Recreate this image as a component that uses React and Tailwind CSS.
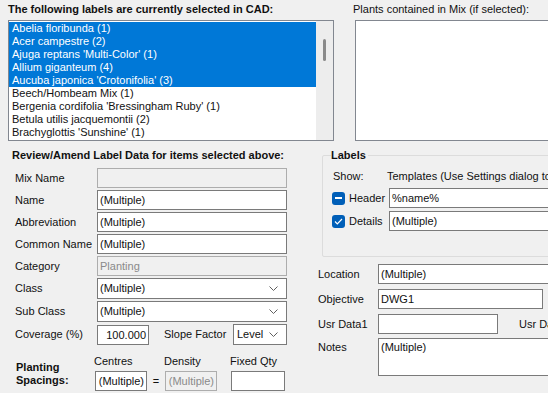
import React from 'react';

const items = [
  ['Abelia floribunda (1)', true],
  ['Acer campestre (2)', true],
  ["Ajuga reptans 'Multi-Color' (1)", true],
  ['Allium giganteum (4)', true],
  ["Aucuba japonica 'Crotonifolia' (3)", true],
  ['Beech/Hombeam Mix (1)', false],
  ["Bergenia cordifolia 'Bressingham Ruby' (1)", false],
  ['Betula utilis jacquemontii (2)', false],
  ["Brachyglottis 'Sunshine' (1)", false],
];

const Chevron = () => (
  <svg width="9" height="5" viewBox="0 0 9 5" className="shrink-0">
    <polyline points="0.5,0.5 4.5,4.5 8.5,0.5" fill="none" stroke="#606060" strokeWidth="1" />
  </svg>
);

const Field = ({ value = '', disabled, className = '' }) => (
  <div
    className={`h-[20px] border border-[#7a7a7a] px-[2px] leading-[18px] whitespace-nowrap overflow-hidden shrink-0 ${
      disabled ? 'bg-[#f0f0f0] text-[#8a8a8a] border-[#adadad]' : 'bg-white'
    } ${className}`}
  >
    {value}
  </div>
);

const Select = ({ value, className = '' }) => (
  <div className={`h-[21px] border border-[#7a7a7a] bg-white flex items-center justify-between pl-[2px] pr-[8px] shrink-0 ${className}`}>
    <span>{value}</span>
    <Chevron />
  </div>
);

const Row = ({ label, children }) => (
  <div className="flex items-center whitespace-nowrap">
    <div className="w-[83px] pl-[1px] shrink-0">{label}</div>
    {children}
  </div>
);

const Check = ({ mixed }) => (
  <div className="w-[13px] h-[13px] rounded-[3px] bg-[#005fb8] flex items-center justify-center shrink-0">
    {mixed ? (
      <div className="w-[7px] h-[1.5px] bg-white" />
    ) : (
      <svg width="9" height="7" viewBox="0 0 9 7">
        <polyline points="1,3.5 3.3,5.8 8,1" fill="none" stroke="white" strokeWidth="1.2" />
      </svg>
    )}
  </div>
);

export default function App() {
  return (
    <div
      className="w-[548px] h-[393px] overflow-hidden bg-[#f0f0f0] text-[11px] text-[#111] whitespace-nowrap"
      style={{ fontFamily: '"Liberation Sans", Arial, sans-serif' }}
    >
      {/* TOP LISTS */}
      <div className="flex pt-[1px]">
        <div className="ml-[8px] w-[326px] shrink-0">
          <div className="font-bold h-[16px] leading-[16px]">The following labels are currently selected in CAD:</div>
          <div className="mt-[3px] h-[121px] border border-[#828790] bg-white flex overflow-hidden">
            <div className="flex-1 pt-[1px]">
              {items.map(([name, sel]) => (
                <div
                  key={name}
                  className={`h-[13px] leading-[13px] pl-[3px] ${sel ? 'bg-[#0078d7] text-white' : ''}`}
                >
                  {name}
                </div>
              ))}
            </div>
            <div className="w-[17px] bg-[#ededed] shrink-0 flex justify-center pt-[18px]">
              <div className="w-[3px] h-[22px] bg-[#8a8a8a] rounded-full" />
            </div>
          </div>
        </div>
        <div className="ml-[19px] w-[220px] shrink-0">
          <div className="h-[16px] leading-[16px]">Plants contained in Mix (if selected):</div>
          <div className="mt-[3px] ml-[2px] h-[121px] border border-[#828790] bg-white" />
        </div>
      </div>

      {/* BOTTOM */}
      <div className="flex mt-[6px]">
        {/* REVIEW / AMEND */}
        <div className="ml-[12px] w-[280px] shrink-0">
          <div className="font-bold h-[16px] leading-[16px]">Review/Amend Label Data for items selected above:</div>
          <div className="ml-[2px] mt-[5px] flex flex-col gap-[2px] w-[273px]">
            <Row label="Mix Name"><Field disabled className="w-[190px]" /></Row>
            <Row label="Name"><Field value="(Multiple)" className="w-[190px]" /></Row>
            <Row label="Abbreviation"><Field value="(Multiple)" className="w-[190px]" /></Row>
            <Row label="Common Name"><Field value="(Multiple)" className="w-[190px]" /></Row>
            <Row label="Category"><Field value="Planting" disabled className="w-[190px]" /></Row>
            <Row label="Class"><Select value="(Multiple)" className="w-[190px]" /></Row>
            <Row label="Sub Class"><Select value="(Multiple)" className="w-[190px]" /></Row>
            <Row label="Coverage (%)">
              <Field value="100.000" className="w-[52px] text-right" />
              <span className="ml-[15px] w-[69px] shrink-0">Slope Factor</span>
              <Select value="Level" className="w-[54px] pl-[3px]" />
            </Row>
          </div>
          <div className="flex mt-[8px]">
            <div className="w-[83px] pt-[8px] pl-[4px] font-bold leading-[13px] shrink-0">
              Planting<br />Spacings:
            </div>
            <div className="flex flex-col">
              <div className="flex h-[16px] leading-[16px]">
                <span className="w-[70px] -ml-[1px]">Centres</span>
                <span className="w-[66px]">Density</span>
                <span>Fixed Qty</span>
              </div>
              <div className="flex items-center mt-[2px]">
                <Field value="(Multiple)" className="w-[52px] text-right" />
                <span className="w-[18px] text-center">=</span>
                <Field value="(Multiple)" disabled className="w-[52px] flex justify-end" />
                <Field className="w-[54px] ml-[14px]" />
              </div>
            </div>
          </div>
        </div>

        {/* LABELS + OTHER FIELDS */}
        <div className="ml-[26px] w-[260px] shrink-0">
          <fieldset className="ml-[4px] border border-[#dcdcdc] rounded-[2px] h-[110px] w-[260px]">
            <legend className="ml-[8px] font-bold h-[16px] leading-[16px] pr-[2px]">Labels</legend>
            <div className="pl-[10px] mt-[6px] flex h-[14px] leading-[14px]">
              <span className="w-[54px]">Show:</span>
              <span>Templates (Use Settings dialog to edit)</span>
            </div>
            <div className="flex flex-col gap-[3px] mt-[5px] pl-[9px]">
              <div className="flex items-center">
                <Check mixed />
                <span className="ml-[4px] w-[40px]">Header</span>
                <Field value="%name%" className="w-[200px]" />
              </div>
              <div className="flex items-center">
                <Check />
                <span className="ml-[4px] w-[40px]">Details</span>
                <Field value="(Multiple)" className="w-[200px]" />
              </div>
            </div>
          </fieldset>
          <div className="mt-[7px] flex flex-col gap-[5px]">
            <div className="flex items-center">
              <span className="w-[60px] shrink-0">Location</span>
              <Field value="(Multiple)" className="w-[200px]" />
            </div>
            <div className="flex items-center">
              <span className="w-[60px] shrink-0">Objective</span>
              <Field value="DWG1" className="w-[165px]" />
            </div>
            <div className="flex items-center">
              <span className="w-[60px] shrink-0">Usr Data1</span>
              <Field className="w-[120px]" />
              <span className="ml-[21px]">Usr Data2</span>
            </div>
            <div className="flex -mt-[1px]">
              <span className="w-[60px] pt-[1px] shrink-0">Notes</span>
              <div className="w-[200px] h-[38px] border border-[#7a7a7a] bg-white px-[2px] leading-[16px] shrink-0">(Multiple)</div>
            </div>
          </div>
        </div>
      </div>
    </div>
  );
}
